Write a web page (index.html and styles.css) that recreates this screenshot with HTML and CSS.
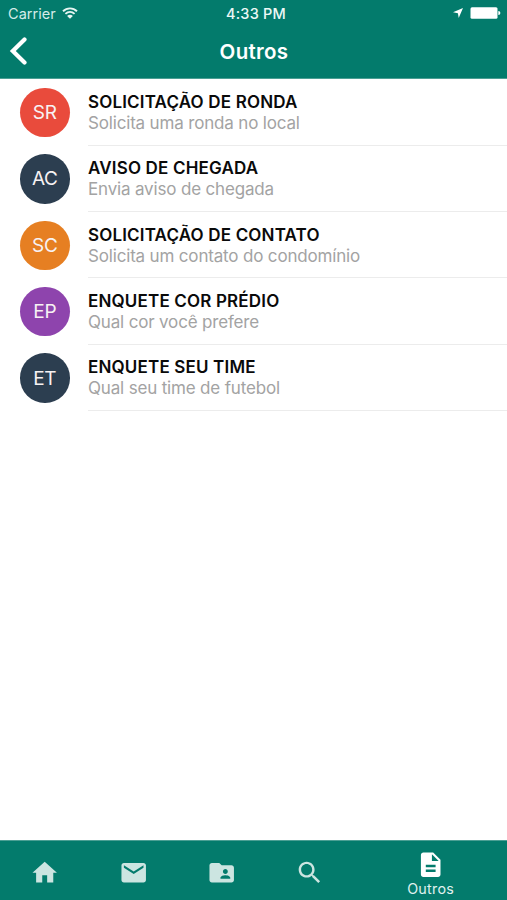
FILE: index.html
```html
<!DOCTYPE html>
<html lang="pt-BR">
<head>
<meta charset="utf-8">
<title>Outros</title>
<link rel="stylesheet" href="styles.css">
</head>
<body>
<div class="app">
  <header class="header">
    <div class="status">
      <div class="status-left">
        <span class="carrier">Carrier</span>
        <svg class="wifi" viewBox="0 0 16 12"><path d="M1 4.300C5 .4 11 .4 15 4.300M3.400 6.900c2.700-2.500 6.500-2.500 9.200 0" fill="none" stroke="currentColor" stroke-width="1.900"/><path d="M8 11.700 5.100 8.900c1.700-1.500 4.100-1.500 5.800 0z" fill="currentColor"/></svg>
      </div>
      <span class="clock">4:33 PM</span>
      <div class="status-right">
        <svg class="location" viewBox="0 0 10 10"><path d="M10 0 5.700 10 4.900 5.200 0 4.300z" fill="currentColor"/></svg>
        <svg class="battery" viewBox="0 0 31 12"><rect x=".5" y=".3" width="27" height="11.400" rx="1.500" fill="currentColor"/><path d="M28.300 3.900a2.100 2.100 0 0 1 0 4.200z" fill="currentColor"/></svg>
      </div>
    </div>
    <div class="nav">
      <svg class="back" viewBox="0 0 18 30"><path d="M15.500 3.500 3.800 15l11.700 11.500" fill="none" stroke="currentColor" stroke-width="4.200" stroke-linecap="round" stroke-linejoin="miter"/></svg>
      <h1 class="nav-title">Outros</h1>
    </div>
  </header>
  <main class="list">
    <div class="row"><div class="avatar red">SR</div><div class="text"><div class="title">SOLICITAÇÃO DE RONDA</div><div class="sub">Solicita uma ronda no local</div></div></div>
    <div class="row"><div class="avatar navy">AC</div><div class="text"><div class="title">AVISO DE CHEGADA</div><div class="sub">Envia aviso de chegada</div></div></div>
    <div class="row"><div class="avatar orange">SC</div><div class="text"><div class="title">SOLICITAÇÃO DE CONTATO</div><div class="sub">Solicita um contato do condomínio</div></div></div>
    <div class="row"><div class="avatar purple">EP</div><div class="text"><div class="title">ENQUETE COR PRÉDIO</div><div class="sub">Qual cor você prefere</div></div></div>
    <div class="row"><div class="avatar navy">ET</div><div class="text"><div class="title">ENQUETE SEU TIME</div><div class="sub">Qual seu time de futebol</div></div></div>
  </main>
  <nav class="tabs">
    <div class="tab"><svg viewBox="0 0 24 24"><path d="M10 20v-6h4v6h5v-8h3L12 3 2 12h3v8z"/></svg></div>
    <div class="tab"><svg viewBox="0 0 24 24"><path d="M20 4H4c-1.100 0-1.990.9-1.990 2L2 18c0 1.100.9 2 2 2h16c1.100 0 2-.9 2-2V6c0-1.100-.9-2-2-2zm0 4l-8 5-8-5V6l8 5 8-5v2z"/></svg></div>
    <div class="tab"><svg viewBox="0 0 24 24"><path d="M20 6h-8l-2-2H4c-1.100 0-1.990.9-1.990 2L2 18c0 1.100.9 2 2 2h16c1.100 0 2-.9 2-2V8c0-1.100-.9-2-2-2zm-5 3c1.100 0 2 .9 2 2s-.9 2-2 2-2-.9-2-2 .9-2 2-2zm4 8h-8v-1c0-1.330 2.670-2 4-2s4 .67 4 2v1z"/></svg></div>
    <div class="tab"><svg viewBox="0 0 24 24"><path d="M15.500 14h-.79l-.28-.27C15.410 12.590 16 11.110 16 9.500 16 5.910 13.090 3 9.500 3S3 5.910 3 9.500 5.910 16 9.500 16c1.610 0 3.090-.59 4.230-1.570l.27.28v.79l5 4.990L20.490 19l-4.990-5zm-6 0C7.010 14 5 11.990 5 9.500S7.010 5 9.500 5 14 7.010 14 9.500 11.990 14 9.500 14z"/></svg></div>
    <div class="tab active"><svg viewBox="0 0 24 24"><path d="M14 2H6c-1.100 0-1.990.9-1.990 2L4 20c0 1.100.89 2 1.990 2H18c1.100 0 2-.9 2-2V8l-6-6zm2 16H8v-2h8v2zm0-4H8v-2h8v2zm-3-5V3.500L18.500 9H13z"/></svg><span class="tab-label">Outros</span></div>
  </nav>
</div>
</body>
</html>
```
FILE: styles.css
```css
* { box-sizing: border-box; }
body { margin: 0; background: #fff; font-family: Inter, "Liberation Sans", sans-serif; }
svg { display: block; flex: none; }
.app { width: 507px; height: 900px; display: flex; flex-direction: column; overflow: hidden; }
.header { height: 79px; flex: none; background: #037b6c; color: #fff; border-bottom: 1px solid #4b9f94; }
.status { height: 26px; display: grid; grid-template-columns: 1fr auto 1fr; align-items: center; padding: 1px 6px 0 8px; font-size: 14.500px; }
.status-left, .status-right { display: flex; align-items: center; }
.status-right { justify-content: flex-end; gap: 7px; }
.carrier { color: #d5ebe8; letter-spacing: 0.050px; }
.wifi { width: 16px; height: 12px; margin-left: 6px; margin-top: -2px; color: #e6f5f2; }
.clock { padding-left: 3px; font-weight: 500; letter-spacing: 0.200px; color: #ecf8f6; }
.location { width: 10px; height: 10px; margin-top: -1px; }
.battery { width: 31px; height: 12px; margin-top: -1px; }
.nav { height: 52px; display: grid; grid-template-columns: 1fr auto 1fr; align-items: center; padding: 0 8px 0 9px; }
.back { width: 18px; height: 30px; margin-top: -2px; }
.nav-title { margin: 0; font-size: 20.500px; line-height: 26px; font-weight: 600; letter-spacing: 0.300px; }
.list { flex: 1; padding-top: 0.300px; }
.row { height: 66.400px; display: flex; align-items: center; padding-left: 20px; }
.avatar { width: 49.500px; height: 49.500px; flex: none; border-radius: 50%; display: flex; align-items: center; justify-content: center; color: #f7f2f3; font-size: 19px; letter-spacing: -0.300px; }
.red { background: #e94b3c; }
.navy { background: #2c3e50; }
.orange { background: #e67f22; }
.purple { background: #8e44ad; }
.text { flex: 1; height: 100%; margin-left: 18.500px; padding-top: 12.500px; border-bottom: 1px solid #ececec; }
.title { font-size: 17px; line-height: 21px; font-weight: 600; letter-spacing: 0.170px; color: #0a0a0a; white-space: nowrap; }
.sub { font-size: 17px; line-height: 21px; letter-spacing: -0.170px; color: #a3a3a3; white-space: nowrap; }
.tabs { height: 60px; flex: none; display: flex; padding-left: 1px; background: #037b6c; border-top: 1px solid #4b9f94; }
.tab { width: 88.300px; display: flex; flex-direction: column; align-items: center; padding-top: 17px; color: #cce5e1; }
.tab svg { width: 29.400px; height: 29.400px; fill: currentColor; }
.tab.active { flex: 1; padding-top: 9px; color: #fff; }
.tab-label { font-size: 14.300px; line-height: 19px; letter-spacing: 0.250px; color: #e0f2ef; }
```
